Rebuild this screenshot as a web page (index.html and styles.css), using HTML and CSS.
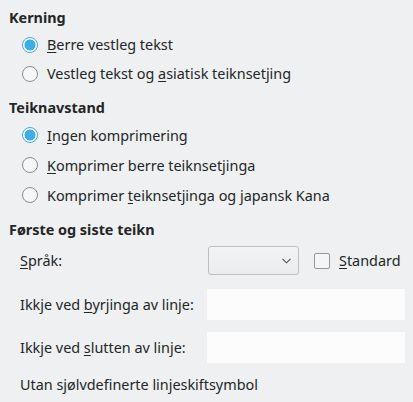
FILE: index.html
```html
<!DOCTYPE html>
<html>
<head>
<meta charset="utf-8">
<link rel="stylesheet" href="styles.css">
</head>
<body>
<div class="page">
  <div class="heading">Kerning</div>
  <div class="group">
    <div class="radio-row"><span class="radio checked"></span><span><u>B</u>erre vestleg tekst</span></div>
    <div class="radio-row"><span class="radio"></span><span>Vestleg tekst og <u>a</u>siatisk teiknsetjing</span></div>
  </div>
  <div class="heading h2">Teiknavstand</div>
  <div class="group">
    <div class="radio-row r30"><span class="radio checked"></span><span><u>I</u>ngen komprimering</span></div>
    <div class="radio-row r30"><span class="radio"></span><span><u>K</u>omprimer berre teiknsetjinga</span></div>
    <div class="radio-row r30"><span class="radio"></span><span>Komprimer <u>t</u>eiknsetjinga og japansk Kana</span></div>
  </div>
  <div class="heading h3">Første og siste teikn</div>
  <div class="form">
    <div class="label l1"><span><u>S</u>pråk:</span></div>
    <div class="lang">
      <div class="combo">
        <svg class="chev" width="9" height="6" viewBox="0 0 9 6"><path d="M0.5 0.8 L4.5 4.8 L8.5 0.8" fill="none" stroke="#4d4d4d" stroke-width="1.1"/></svg>
      </div>
      <span class="check"></span>
      <span class="std"><u>S</u>tandard</span>
    </div>
    <div class="label l2"><span>Ikkje ved <u>b</u>yrjinga av linje:</span></div>
    <div class="input l2"></div>
    <div class="label l3"><span>Ikkje ved <u>s</u>lutten av linje:</span></div>
    <div class="input l3"></div>
  </div>
  <div class="note">Utan sjølvdefinerte linjeskiftsymbol</div>
</div>
</body>
</html>
```

FILE: styles.css
```css
html, body {
  margin: 0;
  padding: 0;
  background: #eff0f1;
}
body {
  font-family: "Noto Sans", "Open Sans", sans-serif;
  font-size: 14.4px;
  color: #232627;
  width: 413px;
  height: 402px;
  overflow: hidden;
}
u {
  text-decoration-thickness: 1px;
  text-underline-offset: 2px;
}
.page {
  padding: 8px 0 0 9px;
  display: flex;
  flex-direction: column;
}
.heading {
  font-weight: bold;
  height: 20px;
  line-height: 20px;
}
.h2 { margin-top: 10px; }
.h3 { margin-top: 10px; }
.group {
  display: flex;
  flex-direction: column;
  padding-left: 13px;
  margin-top: 2px;
}
.radio-row {
  height: 29px;
  display: flex;
  align-items: center;
  gap: 9px;
}
.radio-row.r30 { height: 30px; }
.radio {
  width: 14px;
  height: 14px;
  border-radius: 50%;
  border: 1px solid #8a8c8e;
  background: #f7f7f7;
  box-sizing: content-box;
  flex: none;
}
.radio.checked {
  border-color: #3daee9;
  background: radial-gradient(circle, #3daee9 0 5.2px, #fcfcfc 5.8px);
}
.form {
  display: grid;
  grid-template-columns: 187px 198px;
  grid-template-rows: 29px 14px 31px 12px 31px;
  margin-top: 6px;
  padding-left: 11px;
}
.label {
  display: flex;
  align-items: center;
}
.l1 { grid-row: 1; }
.lang {
  grid-row: 1;
  display: flex;
  align-items: center;
}
.combo {
  width: 82px;
  height: 27px;
  margin-left: 1px;
  border: 1px solid #bcbebf;
  border-radius: 3px;
  background: linear-gradient(#f3f3f4, #ebeced);
  display: flex;
  align-items: center;
  justify-content: flex-end;
  padding-right: 7px;
  box-sizing: content-box;
  flex: none;
  margin-right: 15px;
}
.chev { display: block; }
.check {
  width: 14px;
  height: 14px;
  border: 1px solid #95979a;
  border-radius: 2px;
  background: #f5f5f5;
  flex: none;
  margin-right: 9px;
}
.input {
  background: #fcfcfc;
}
.l2 { grid-row: 3; }
.l3 { grid-row: 5; }
.note {
  margin-top: 12px;
  padding-left: 11px;
  height: 20px;
  line-height: 20px;
}
```
